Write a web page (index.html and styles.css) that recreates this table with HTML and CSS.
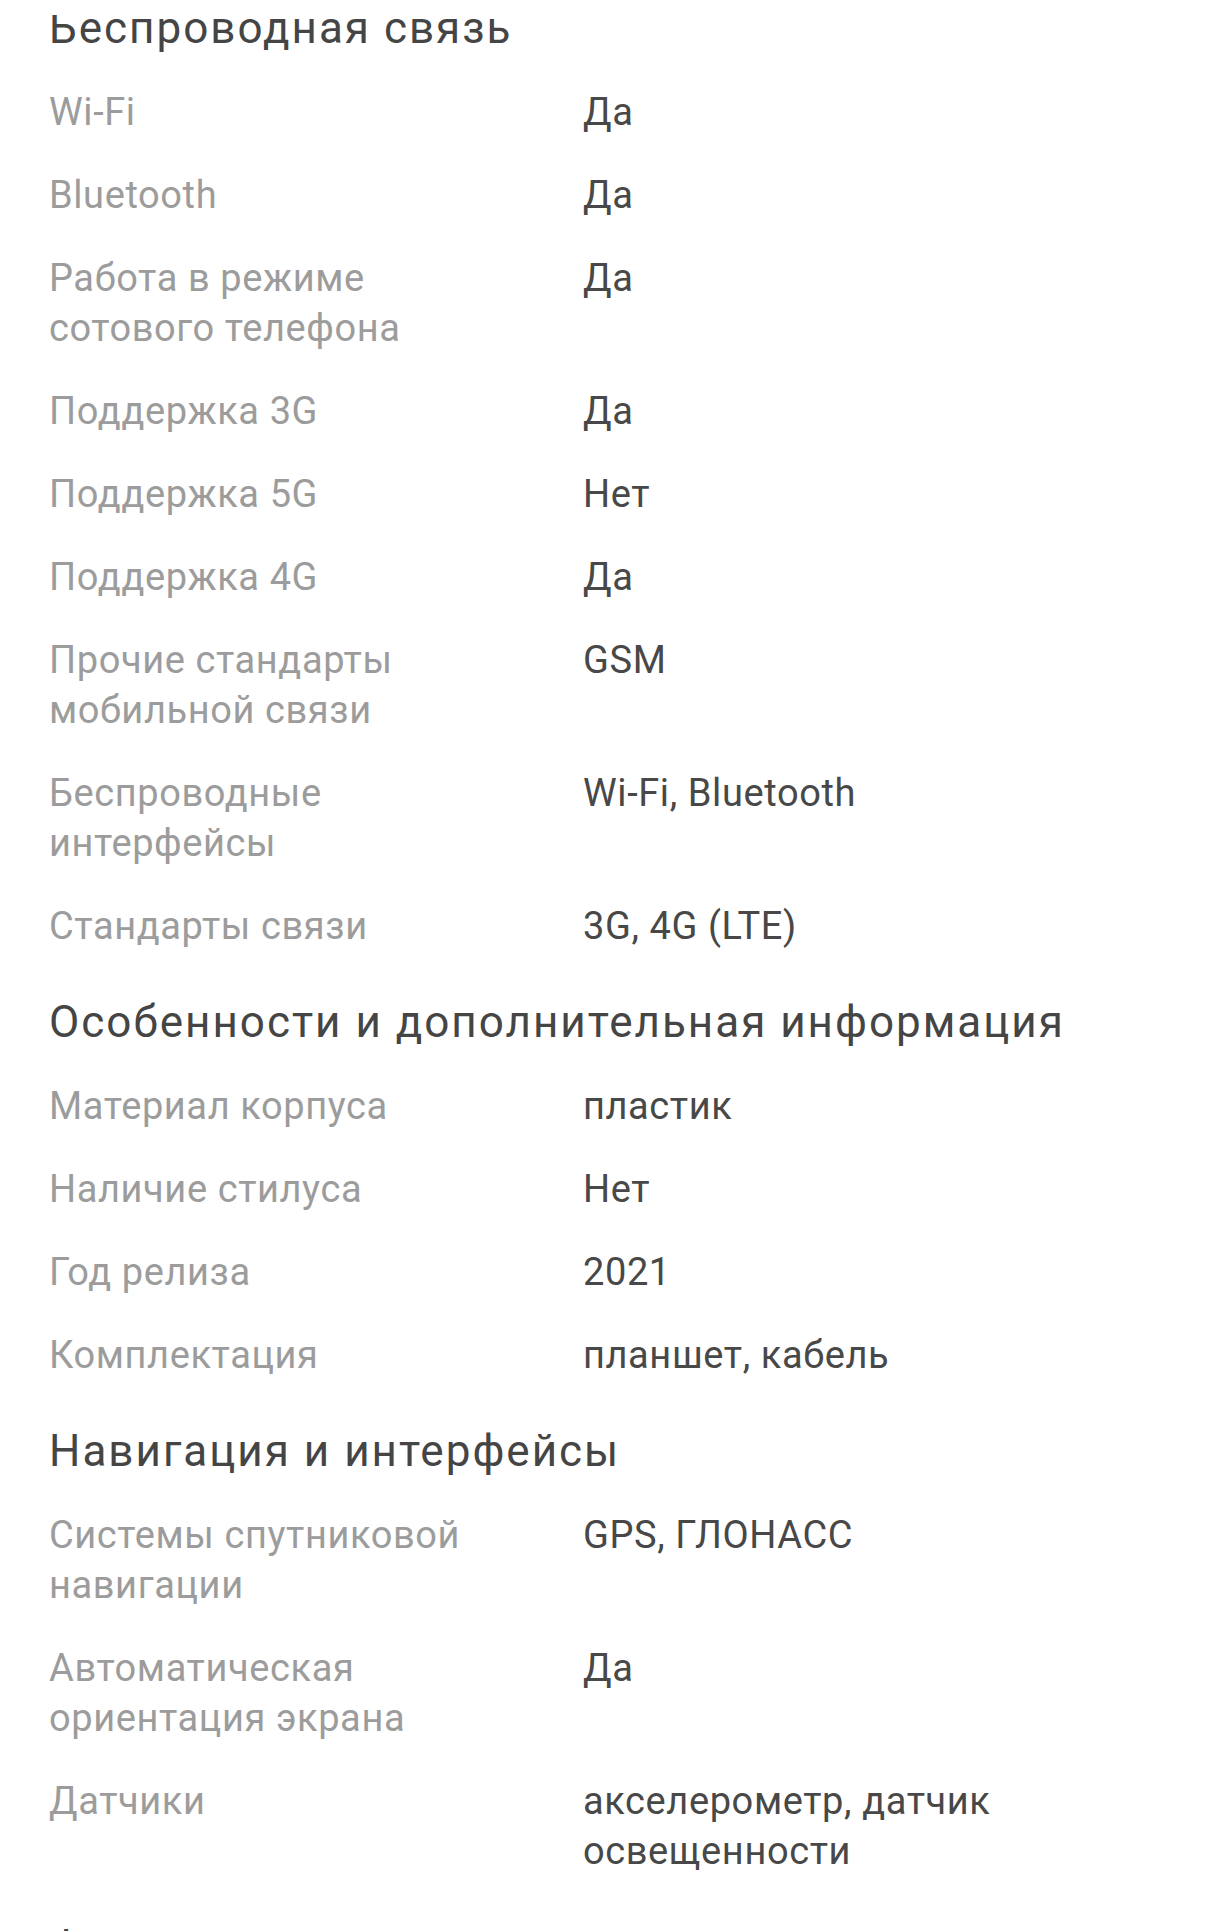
FILE: index.html
```html
<!DOCTYPE html>
<html lang="ru">
<head>
<meta charset="utf-8">
<title>Характеристики</title>
<link rel="stylesheet" href="styles.css">
</head>
<body>
<div class="top-mask"></div>
<main class="specs">
  <section class="group">
    <h2 class="group-title">Беспроводная связь</h2>
    <dl class="spec-list">
      <div class="spec-row"><dt>Wi-Fi</dt><dd>Да</dd></div>
      <div class="spec-row"><dt>Bluetooth</dt><dd>Да</dd></div>
      <div class="spec-row"><dt>Работа в режиме сотового телефона</dt><dd>Да</dd></div>
      <div class="spec-row"><dt>Поддержка 3G</dt><dd>Да</dd></div>
      <div class="spec-row"><dt>Поддержка 5G</dt><dd>Нет</dd></div>
      <div class="spec-row"><dt>Поддержка 4G</dt><dd>Да</dd></div>
      <div class="spec-row"><dt>Прочие стандарты мобильной связи</dt><dd>GSM</dd></div>
      <div class="spec-row"><dt>Беспроводные интерфейсы</dt><dd>Wi-Fi, Bluetooth</dd></div>
      <div class="spec-row"><dt>Стандарты связи</dt><dd>3G, 4G (LTE)</dd></div>
    </dl>
  </section>
  <section class="group">
    <h2 class="group-title">Особенности и дополнительная информация</h2>
    <dl class="spec-list">
      <div class="spec-row"><dt>Материал корпуса</dt><dd>пластик</dd></div>
      <div class="spec-row"><dt>Наличие стилуса</dt><dd>Нет</dd></div>
      <div class="spec-row"><dt>Год релиза</dt><dd>2021</dd></div>
      <div class="spec-row"><dt>Комплектация</dt><dd>планшет, кабель</dd></div>
    </dl>
  </section>
  <section class="group">
    <h2 class="group-title">Навигация и интерфейсы</h2>
    <dl class="spec-list">
      <div class="spec-row"><dt>Системы спутниковой навигации</dt><dd>GPS, ГЛОНАСС</dd></div>
      <div class="spec-row"><dt>Автоматическая ориентация экрана</dt><dd>Да</dd></div>
      <div class="spec-row"><dt>Датчики</dt><dd>акселерометр, датчик освещенности</dd></div>
    </dl>
  </section>
  <section class="group">
    <h2 class="group-title">Фотокамера</h2>
  </section>
</main>
</body>
</html>
```

FILE: styles.css
```css
html, body {
  margin: 0;
  padding: 0;
  background: #ffffff;
}

body {
  font-family: Roboto, "Noto Sans", "Liberation Sans", sans-serif;
  overflow: hidden;
}

.top-mask {
  position: fixed;
  top: 0;
  left: 0;
  right: 0;
  height: 15px;
  background: #ffffff;
  z-index: 2;
}

.specs {
  padding: 0 49px;
}

.group + .group {
  margin-top: 26px;
}

.group-title {
  margin: 0;
  padding-bottom: 15px;
  font-size: 44px;
  line-height: 56px;
  letter-spacing: 2px;
  font-weight: 400;
  color: #454545;
}

.spec-list {
  margin: 0;
}

.spec-row {
  display: grid;
  grid-template-columns: 534px 1fr;
  padding: 16px 0 17px;
  font-size: 38px;
  line-height: 50px;
  letter-spacing: 0.6px;
}

.spec-row dt {
  margin: 0;
  padding-right: 84px;
  color: #9c9c9c;
}

.spec-row dd {
  margin: 0;
  color: #484848;
}
```
